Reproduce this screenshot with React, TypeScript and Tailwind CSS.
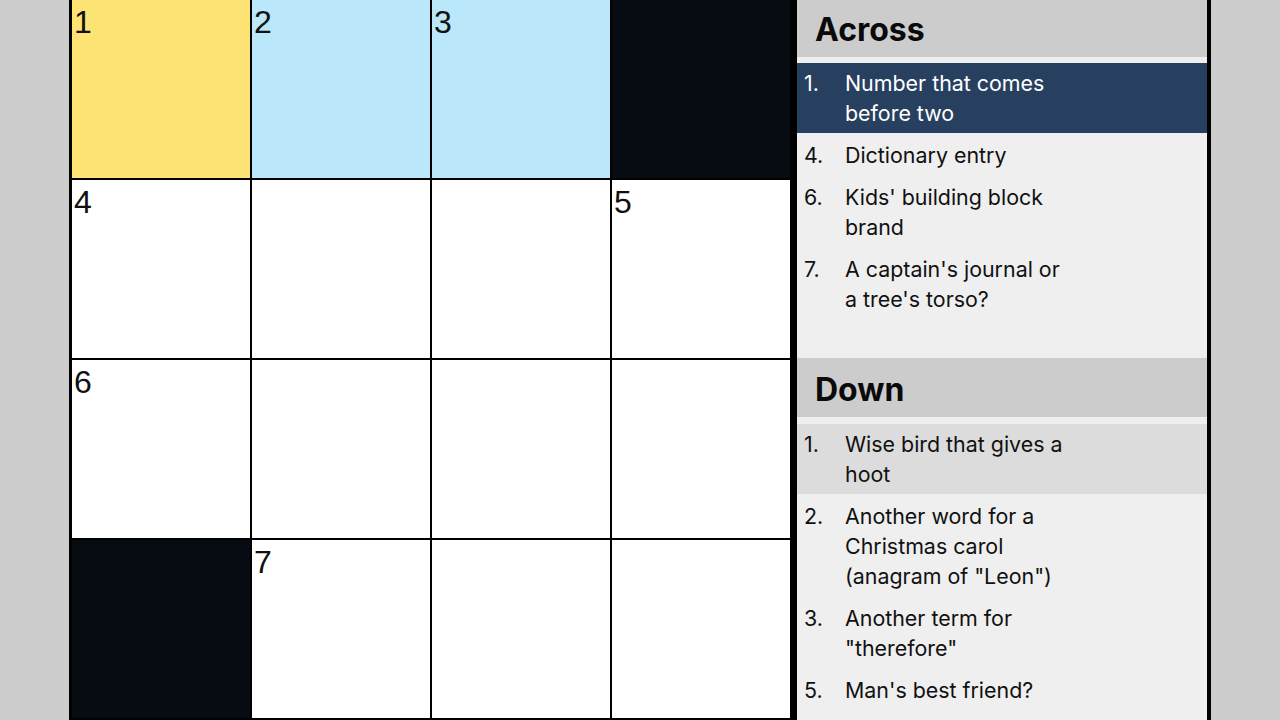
import React from "react";

type Cell = { n?: number; kind: "white" | "black" | "yellow" | "blue" };
type Clue = { n: number; text: string[]; state?: "active" | "related" };

const grid: Cell[][] = [
  [{ n: 1, kind: "yellow" }, { n: 2, kind: "blue" }, { n: 3, kind: "blue" }, { kind: "black" }],
  [{ n: 4, kind: "white" }, { kind: "white" }, { kind: "white" }, { n: 5, kind: "white" }],
  [{ n: 6, kind: "white" }, { kind: "white" }, { kind: "white" }, { kind: "white" }],
  [{ kind: "black" }, { n: 7, kind: "white" }, { kind: "white" }, { kind: "white" }],
];

const across: Clue[] = [
  { n: 1, text: ["Number that comes", "before two"], state: "active" },
  { n: 4, text: ["Dictionary entry"] },
  { n: 6, text: ["Kids' building block", "brand"] },
  { n: 7, text: ["A captain's journal or", "a tree's torso?"] },
];

const down: Clue[] = [
  { n: 1, text: ["Wise bird that gives a", "hoot"], state: "related" },
  { n: 2, text: ["Another word for a", "Christmas carol", "(anagram of \"Leon\")"] },
  { n: 3, text: ["Another term for", "\"therefore\""] },
  { n: 5, text: ["Man's best friend?"] },
];

const cellBg = {
  white: "bg-white",
  black: "bg-[#070c13]",
  yellow: "bg-[#fde274]",
  blue: "bg-[#bae7f9]",
};

function ClueRow({ clue }: { clue: Clue }) {
  const tone =
    clue.state === "active"
      ? "bg-[#27405f] text-white"
      : clue.state === "related"
        ? "bg-[#dcdcdc] text-[#111]"
        : "text-[#111]";
  return (
    <li className={`mb-[2px] flex py-[5px] pl-[7px] text-[21.4px] leading-[30px] ${tone}`}>
      <span className="w-[41px] shrink-0">{clue.n}.</span>
      <span>{clue.text.map((t, i) => <span key={i} className="block">{t}</span>)}</span>
    </li>
  );
}

function Section({ title, clues, headerH, listH, gap }: { title: string; clues: Clue[]; headerH: string; listH: string; gap: string }) {
  return (
    <section>
      <h2 className={`flex items-end bg-[#cccccc] pb-[11px] pl-[18px] text-[32px] font-bold leading-none text-[#0a0a0a] ${headerH}`}>{title}</h2>
      <ul className={`${listH} ${gap}`}>
        {clues.map((c) => <ClueRow key={c.n} clue={c} />)}
      </ul>
    </section>
  );
}

export default function App() {
  return (
    <div className="flex h-[720px] w-full justify-center overflow-hidden bg-[#cccccc] font-['Inter',sans-serif]">
      <div className="flex h-[720px] border-l-[3px] border-r-4 border-black bg-black">
        <div className="grid w-[720px] grid-cols-4">
          {grid.flat().map((c, i) => (
            <div key={i} className={`h-[180px] border-r-2 border-b-2 border-black pl-[2px] pt-[4px] font-['Liberation_Sans',sans-serif] text-[32px] leading-[36px] text-[#111] ${cellBg[c.kind]}`}>
              {c.n}
            </div>
          ))}
        </div>
        <div className="ml-[5px] flex w-[410px] flex-col bg-[#efefef]">
          <Section title="Across" clues={across} headerH="h-[57px]" listH="h-[301px]" gap="pt-[6px]" />
          <Section title="Down" clues={down} headerH="h-[59px]" listH="h-[303px]" gap="pt-[7px]" />
        </div>
      </div>
    </div>
  );
}
